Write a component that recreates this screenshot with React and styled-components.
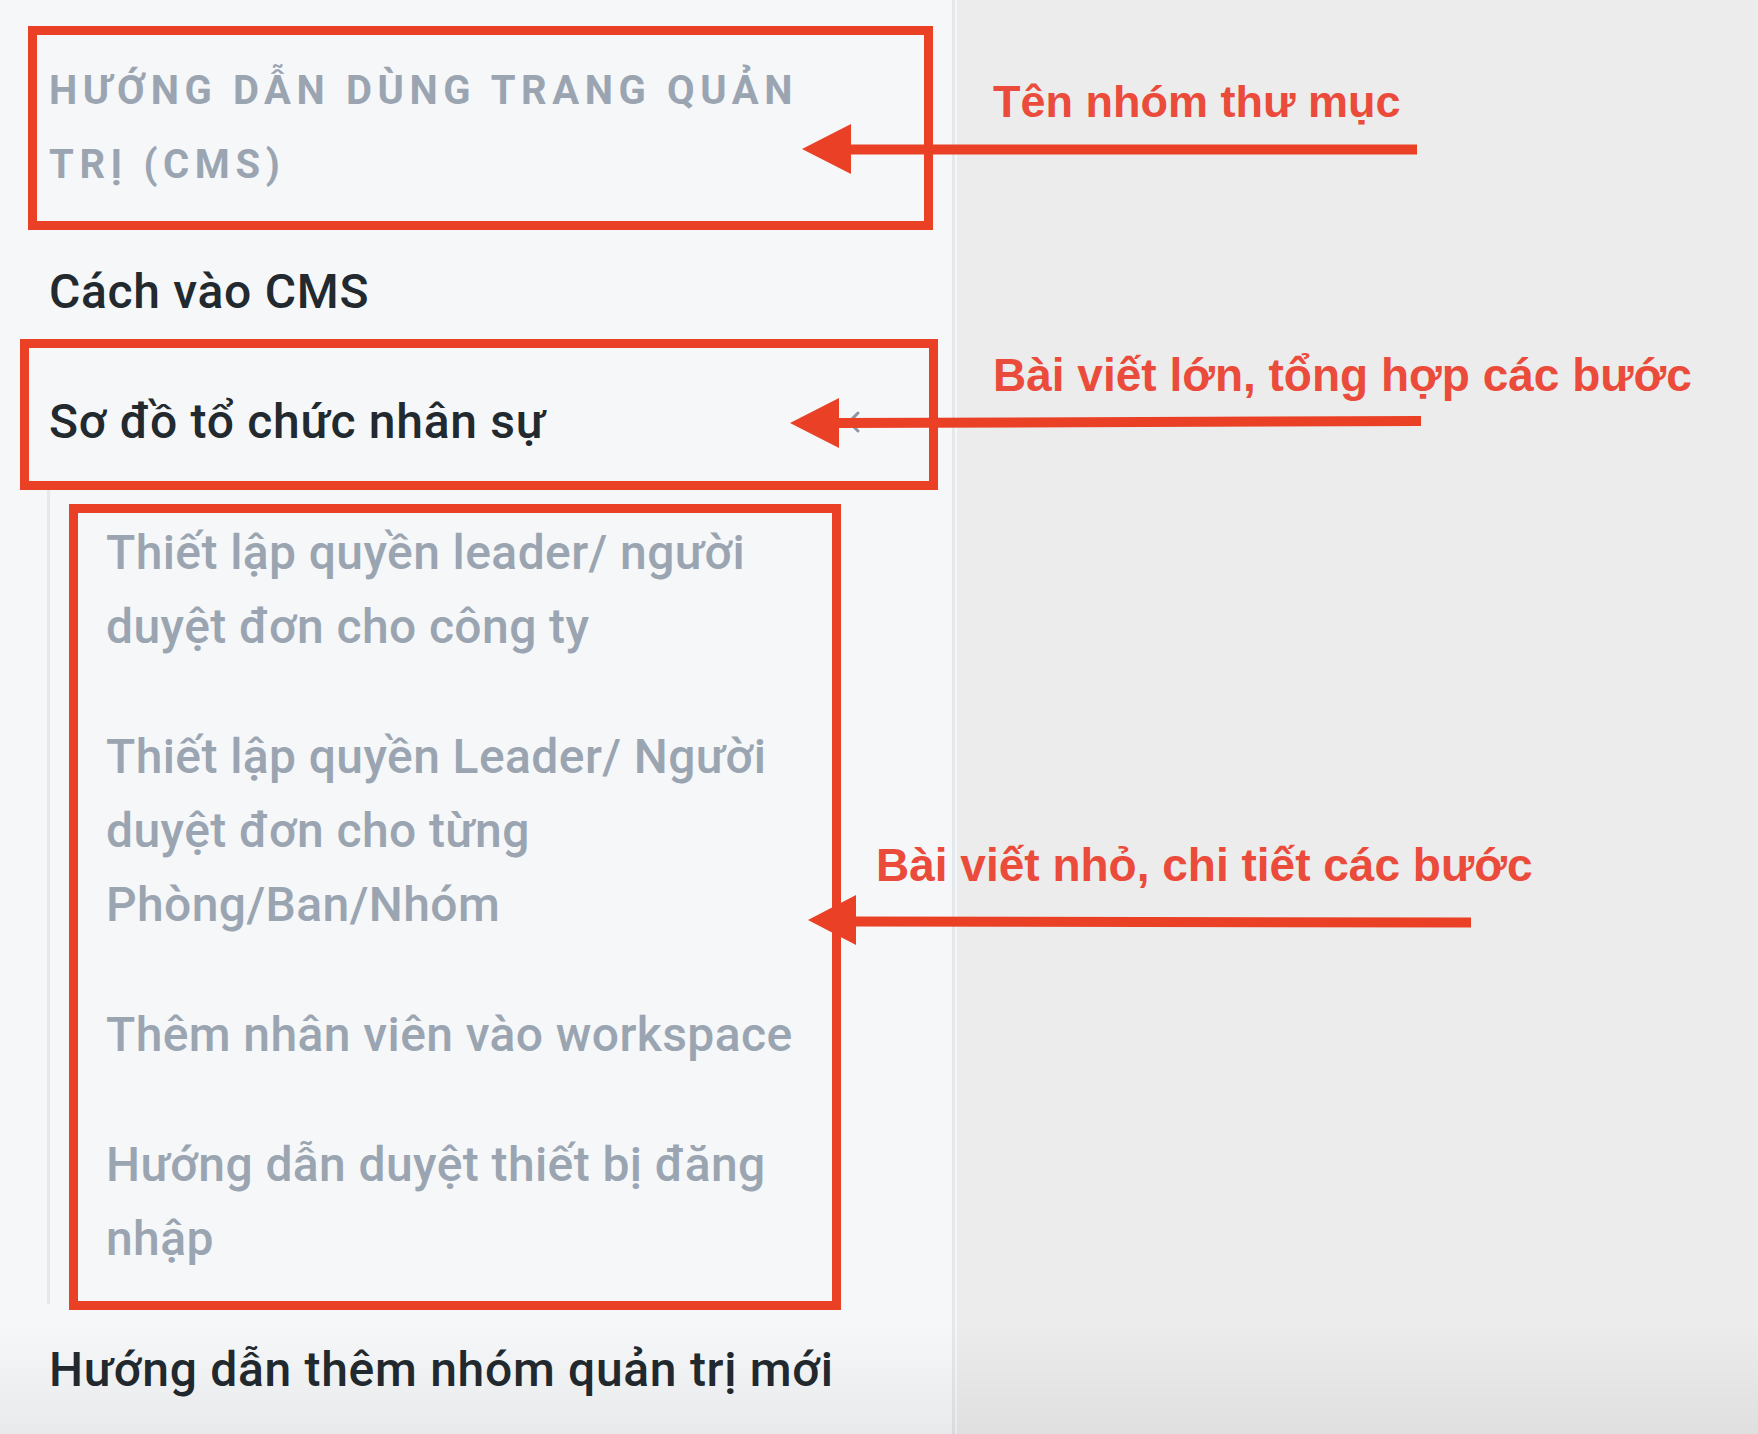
import React from "react";
import styled, { createGlobalStyle } from "styled-components";

const GlobalStyle = createGlobalStyle`
  html, body { margin: 0; padding: 0; }
  body { font-family: Roboto, "Noto Sans", Arial, sans-serif; }
`;

const Page = styled.div`
  position: relative;
  display: flex;
  width: 100%;
  height: 1434px;
  overflow: hidden;
  background: #ececec;
`;

const Sidebar = styled.nav`
  flex: none;
  display: flex;
  flex-direction: column;
  box-sizing: border-box;
  width: 955px;
  height: 100%;
  padding: 54px 84px 0 49px;
  background: #f5f7f9;
  border-right: 3px solid #e3e8ed;
`;

const Main = styled.main`
  flex: 1;
  border-left: 2px solid #f6f7f8;
  background: #ececec;
`;

const GroupTitle = styled.h2`
  margin: 0 0 25px;
  font-size: 40px;
  line-height: 74px;
  font-weight: 700;
  letter-spacing: 5.6px;
  text-transform: uppercase;
  color: #9ba5b1;
`;

const Item = styled.div`
  display: flex;
  align-items: center;
  justify-content: space-between;
  gap: 16px;
  padding: 28px 0;
  font-size: 48px;
  line-height: 74px;
  font-weight: 500;
  letter-spacing: 0.7px;
  color: #22292f;
`;

const SubList = styled.div`
  display: flex;
  flex-direction: column;
  margin: 1px 38px 1px -2px;
  padding-left: 56px;
  border-left: 3px solid #e5e9ed;
`;

const SubItem = styled.div`
  padding: 28px 0;
  font-size: 48px;
  line-height: 74px;
  font-weight: 500;
  letter-spacing: 0.4px;
  color: #9aa5b1;
`;

const Chevron = styled.svg`
  flex: none;
  width: 24px;
  height: 24px;
`;

const BottomFade = styled.div`
  position: absolute;
  left: 0;
  right: 0;
  bottom: 0;
  height: 110px;
  background: linear-gradient(to bottom, rgba(0, 0, 0, 0) 0%, rgba(0, 0, 0, 0.055) 100%);
  pointer-events: none;
`;

const Overlay = styled.div`
  position: absolute;
  inset: 0;
  pointer-events: none;
`;

const Frame = styled.div`
  position: absolute;
  box-sizing: border-box;
  left: ${(p) => p.$x}px;
  top: ${(p) => p.$y}px;
  width: ${(p) => p.$w}px;
  height: ${(p) => p.$h}px;
  border: 9px solid #ea4126;
`;

const Label = styled.div`
  position: absolute;
  left: ${(p) => p.$x}px;
  top: ${(p) => p.$y}px;
  font-family: "Liberation Sans", Arial, sans-serif;
  font-weight: 700;
  font-size: ${(p) => p.$size}px;
  line-height: 1;
  color: #eb4b3b;
  white-space: nowrap;
`;

const ArrowLayer = styled.svg`
  position: absolute;
  left: 0;
  top: 0;
`;

const arrows = [
  { tip: [802, 149], base: 851, half: 25, end: [1417, 149.5], y0: 149.5 },
  { tip: [790, 423], base: 839, half: 25, end: [1421, 421], y0: 423 },
  { tip: [808, 920], base: 856, half: 25, end: [1471, 922.5], y0: 921.5 },
];

export default function App() {
  return (
    <>
      <GlobalStyle />
      <Page>
        <Sidebar>
          <GroupTitle>Hướng dẫn dùng trang quản trị (CMS)</GroupTitle>
          <Item>Cách vào CMS</Item>
          <Item>
            <span>Sơ đồ tổ chức nhân sự</span>
            <Chevron viewBox="0 0 24 24">
              <polyline
                points="14,3 5,12 14,21"
                fill="none"
                stroke="#8c96a2"
                strokeWidth="3"
                strokeLinecap="round"
                strokeLinejoin="round"
              />
            </Chevron>
          </Item>
          <SubList>
            <SubItem>Thiết lập quyền leader/ người duyệt đơn cho công ty</SubItem>
            <SubItem>Thiết lập quyền Leader/ Người duyệt đơn cho từng Phòng/Ban/Nhóm</SubItem>
            <SubItem>Thêm nhân viên vào workspace</SubItem>
            <SubItem>Hướng dẫn duyệt thiết bị đăng nhập</SubItem>
          </SubList>
          <Item>Hướng dẫn thêm nhóm quản trị mới</Item>
        </Sidebar>
        <Main />
        <BottomFade />
        <Overlay>
          <Frame $x={28} $y={26} $w={905} $h={204} />
          <Frame $x={20} $y={339} $w={918} $h={151} />
          <Frame $x={69} $y={504} $w={772} $h={806} />
          <ArrowLayer width="1758" height="1434" viewBox="0 0 1758 1434">
            {arrows.map((a, i) => (
              <g key={i} fill="#ea4126">
                <line
                  x1={a.base - 2}
                  y1={a.y0}
                  x2={a.end[0]}
                  y2={a.end[1]}
                  stroke="#ea4126"
                  strokeWidth="10"
                />
                <polygon
                  points={`${a.tip[0]},${a.tip[1]} ${a.base},${a.tip[1] - a.half} ${a.base},${a.tip[1] + a.half}`}
                />
              </g>
            ))}
          </ArrowLayer>
          <Label $x={993} $y={79} $size={45}>Tên nhóm thư mục</Label>
          <Label $x={993} $y={352} $size={46}>Bài viết lớn, tổng hợp các bước</Label>
          <Label $x={876} $y={842} $size={46}>Bài viết nhỏ, chi tiết các bước</Label>
        </Overlay>
      </Page>
    </>
  );
}
